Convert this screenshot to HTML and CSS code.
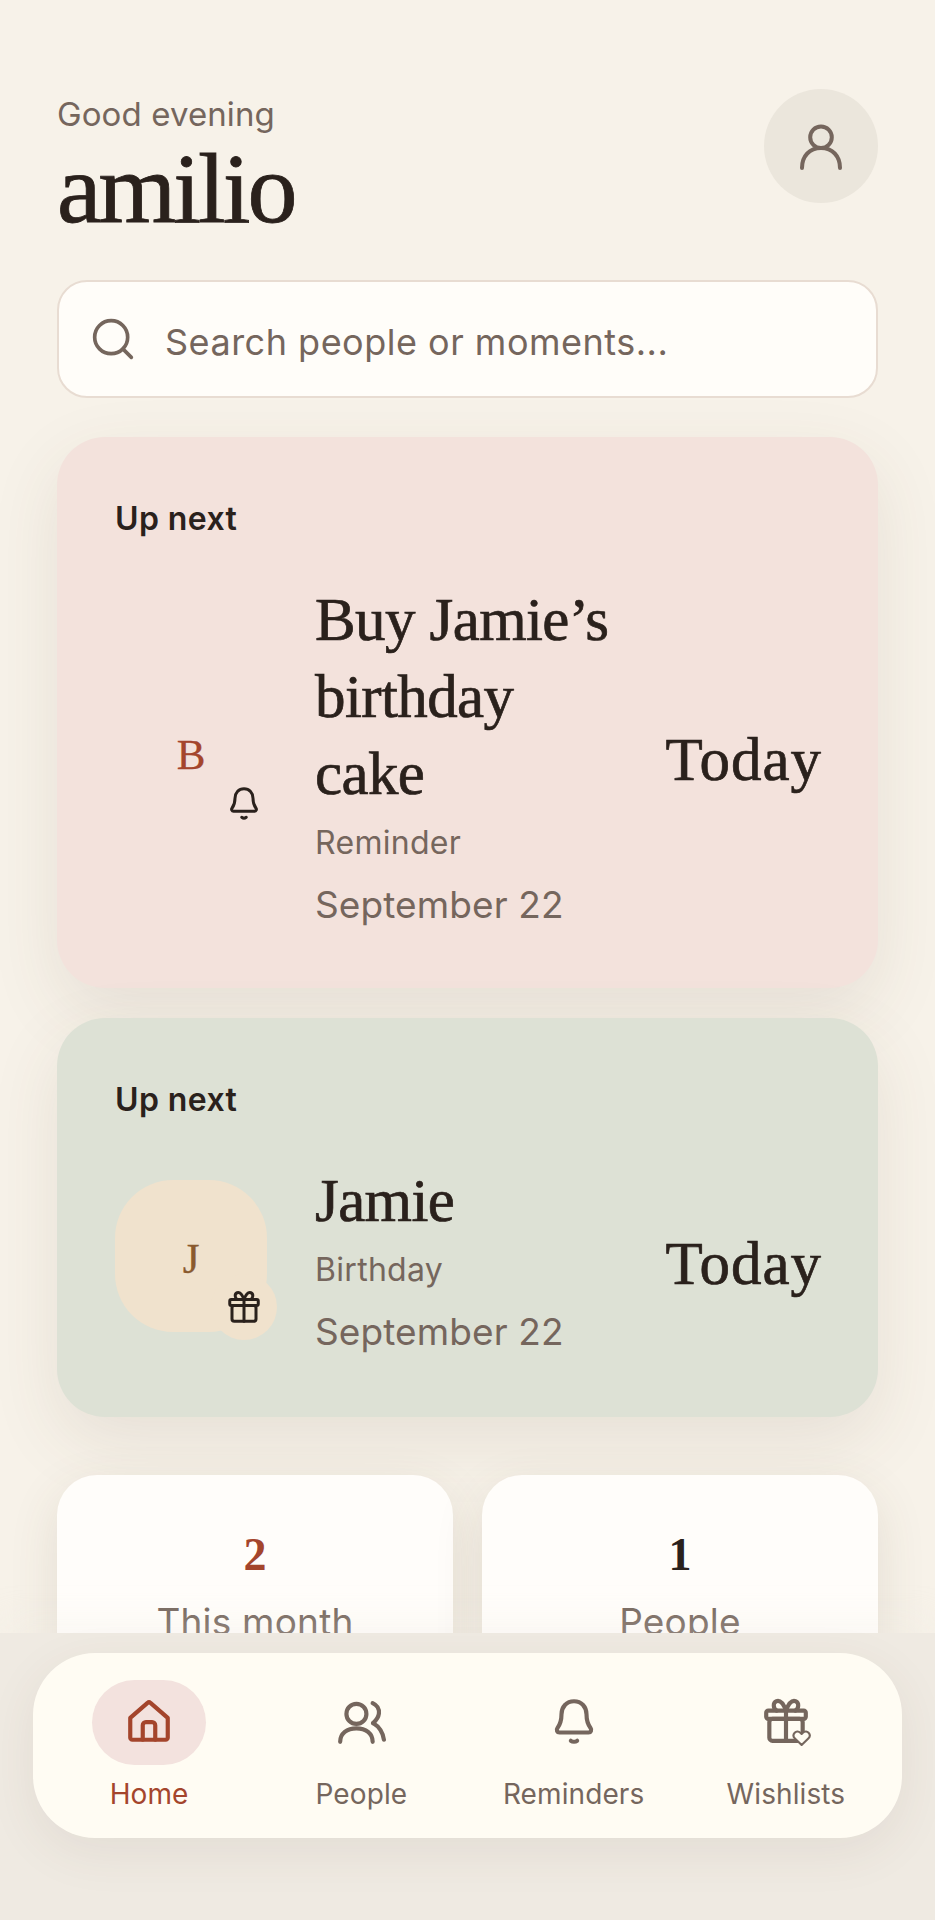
FILE: index.html
```html
<!DOCTYPE html>
<html lang="en">

<head>
    <meta charset="UTF-8">
    <meta name="viewport" content="width=device-width, initial-scale=1.0">
    <title>amilio</title>
    <link rel="stylesheet" href="styles.css">
</head>

<body>
    <div class="page">
        <div class="main">
            <div class="header">
                <div class="hello">
                    <p class="greeting">Good evening</p>
                    <h1 class="logo">amilio</h1>
                </div>
                <div class="profile">
                    <svg class="icon-profile" viewBox="0 0 24 24">
                        <circle cx="12" cy="7.6" r="5.4" />
                        <path d="M2.500 23c0-6 3.800-10 9.500-10s9.500 4 9.500 10" />
                    </svg>
                </div>
            </div>

            <div class="search">
                <svg class="icon-search" viewBox="0 0 24 24">
                    <circle cx="11" cy="11" r="9" />
                    <path d="M17.500 17.500 22 22" />
                </svg>
                <span>Search people or moments...</span>
            </div>

            <div class="card card-rose">
                <h2>Up next</h2>
                <div class="row">
                    <div class="avatar">
                        <span class="initial initial-b">B</span>
                        <span class="badge">
                            <svg viewBox="0 0 24 24">
                                <path d="M12 2.500c-3.600 0-6 2.800-6 6.300 0 3.400-.7 5-2 6.700-.6.800-.1 2 1 2h14c1.100 0 1.600-1.200 1-2-1.300-1.700-2-3.300-2-6.700 0-3.500-2.400-6.300-6-6.300Z" />
                                <path d="M10.500 21.500c.8.600 2.200.600 3 0" />
                            </svg>
                        </span>
                    </div>
                    <div class="text">
                        <h3>Buy Jamie’s birthday cake</h3>
                        <p class="kind">Reminder</p>
                        <p class="date">September 22</p>
                    </div>
                    <div class="when">Today</div>
                </div>
            </div>

            <div class="card card-sage">
                <h2>Up next</h2>
                <div class="row">
                    <div class="avatar avatar-sand">
                        <span class="initial initial-j">J</span>
                        <span class="badge">
                            <svg viewBox="0 0 24 24">
                                <rect x="4" y="11" width="16" height="10.500" rx="1.500" />
                                <rect x="2.500" y="7" width="19" height="4" rx="1" />
                                <path d="M12 7v14.500" />
                                <path d="M12 7C10.500 3 8.800 2 7.400 2.500 5.600 3.200 5.800 6 7.500 7M12 7c1.500-4 3.200-5 4.600-4.500 1.800.7 1.600 3.500-.1 4.500" />
                            </svg>
                        </span>
                    </div>
                    <div class="text">
                        <h3>Jamie</h3>
                        <p class="kind">Birthday</p>
                        <p class="date">September 22</p>
                    </div>
                    <div class="when">Today</div>
                </div>
            </div>

            <div class="stats">
                <div class="stat">
                    <div class="num num-red">2</div>
                    <p>This month</p>
                </div>
                <div class="stat">
                    <div class="num">1</div>
                    <p>People</p>
                </div>
            </div>
        </div>

        <div class="bottom">
            <div class="nav">
                <a href="#" class="nav-item active">
                    <span class="nav-icon">
                        <svg viewBox="0 0 24 24">
                            <path d="M3 10.500 11.300 3.300a1 1 0 0 1 1.400 0L21 10.500V20a1 1 0 0 1-1 1H4a1 1 0 0 1-1-1Z" />
                            <path d="M9 21v-7a1.500 1.500 0 0 1 1.500-1.500h3A1.500 1.500 0 0 1 15 14v7" />
                        </svg>
                    </span>
                    Home
                </a>
                <a href="#" class="nav-item">
                    <span class="nav-icon">
                        <svg viewBox="0 0 24 24">
                            <circle cx="9.800" cy="8.600" r="4.800" />
                            <path d="M2 22c0-4 3.300-6.500 7.800-6.500S17.600 18 17.600 22" />
                            <path d="M17.600 3.400c2.200 1 3.200 3 3 5-.2 1.700-1.200 3.200-2.800 4.600" />
                            <path d="M17.800 13c3 1.800 4.700 4.500 5.200 8" />
                        </svg>
                    </span>
                    People
                </a>
                <a href="#" class="nav-item">
                    <span class="nav-icon">
                        <svg viewBox="0 0 24 24">
                            <path d="M12 2.500c-3.600 0-6 2.800-6 6.300 0 3.400-.7 5-2 6.700-.6.800-.1 2 1 2h14c1.100 0 1.600-1.200 1-2-1.300-1.700-2-3.300-2-6.700 0-3.500-2.400-6.300-6-6.300Z" />
                            <path d="M10.500 21.500c.8.600 2.200.600 3 0" />
                        </svg>
                    </span>
                    Reminders
                </a>
                <a href="#" class="nav-item">
                    <span class="nav-icon">
                        <svg viewBox="0 0 24 24">
                            <rect x="4" y="11" width="16" height="10.500" rx="1.500" />
                            <rect x="2.500" y="7" width="19" height="4" rx="1" />
                            <path d="M12 7v14.500" />
                            <path d="M12 7C10.500 3 8.800 2 7.400 2.500 5.600 3.200 5.800 6 7.500 7M12 7c1.500-4 3.200-5 4.600-4.500 1.800.7 1.600 3.500-.1 4.500" />
                            <path class="heart" d="M19.500 23.500 16.300 20.400c-1.900-1.900.7-4.600 2.600-2.800l.6.600.6-.6c1.900-1.800 4.500.9 2.600 2.800Z" />
                        </svg>
                    </span>
                    Wishlists
                </a>
            </div>
        </div>
    </div>
</body>

</html>
```

FILE: styles.css
```css
* {
    padding: 0;
    margin: 0;
    box-sizing: border-box;
}

body {
    background-color: #f7f2e9;
    color: #2a211c;
    font-family: "Inter", "Liberation Sans", sans-serif;
}

svg {
    display: block;
    fill: none;
    stroke: currentColor;
    stroke-width: 2;
    stroke-linecap: round;
    stroke-linejoin: round;
}

.page {
    height: 1920px;
    display: flex;
    flex-direction: column;
    overflow: hidden;
}

.main {
    height: 1633px;
    flex: none;
    padding: 89px 57px 0;
    overflow: hidden;
}

/* header */
.header {
    height: 191px;
    display: flex;
    justify-content: space-between;
    align-items: flex-start;
}

.greeting {
    padding-top: 2px;
    font-size: 33px;
    line-height: 46px;
    color: #75665d;
    letter-spacing: 0.1px;
}

.logo {
    font-family: "Liberation Serif", serif;
    font-size: 100px;
    font-weight: 400;
    line-height: 103px;
    letter-spacing: -3px;
    -webkit-text-stroke: 0.8px #2a211c;
}

.profile {
    width: 114px;
    height: 114px;
    border-radius: 50%;
    background-color: #ebe6dc;
    color: #75665d;
    display: flex;
    align-items: center;
    justify-content: center;
}

.icon-profile {
    width: 48px;
    height: 48px;
}

/* search */
.search {
    height: 118px;
    padding: 0 32px;
    display: flex;
    align-items: center;
    gap: 30px;
    background-color: #fffdf9;
    border: 2px solid #e8dcd2;
    border-radius: 30px;
    color: #75665d;
    font-size: 36px;
    letter-spacing: 0.5px;
}

.search span {
    padding-top: 6px;
}

.icon-search {
    width: 44px;
    height: 44px;
    flex: none;
}

/* up next cards */
.card {
    margin-top: 39px;
    padding: 58px 58px 54px;
    border-radius: 48px;
    box-shadow: 0 24px 70px rgba(90, 70, 50, .1);
}

.card-sage {
    margin-top: 30px;
    padding-bottom: 56px;
    background-color: #dde1d5;
}

.card-rose {
    background-color: #f3e2dc;
}

.card h2 {
    font-size: 32px;
    font-weight: 600;
    line-height: 48px;
    letter-spacing: 0.4px;
    margin-bottom: 38px;
}

.row {
    display: flex;
    align-items: center;
}

.avatar {
    width: 152px;
    height: 152px;
    flex: none;
    margin: 0 48px 12px 0;
    padding-top: 5px;
    border-radius: 58px;
    display: flex;
    align-items: center;
    justify-content: center;
    position: relative;
}

.avatar-sand,
.avatar-sand .badge {
    background-color: #f0e2cd;
}

.initial {
    font-family: "Liberation Serif", serif;
    font-size: 43px;
    -webkit-text-stroke: 0.3px currentColor;
}

.initial-b {
    color: #a4452c;
}

.initial-j {
    color: #8a5a2e;
}

/* sits on the bottom right corner of the avatar */
.badge {
    width: 66px;
    height: 66px;
    border-radius: 50%;
    display: flex;
    align-items: center;
    justify-content: center;
    position: absolute;
    right: -10px;
    bottom: -8px;
}

.badge svg {
    width: 36px;
    height: 36px;
}

.text {
    flex: 1;
    padding-right: 30px;
}

.text h3 {
    font-family: "Liberation Serif", serif;
    font-size: 61px;
    font-weight: 400;
    line-height: 77px;
    letter-spacing: -0.6px;
    -webkit-text-stroke: 0.7px #2a211c;
}

.kind {
    margin-top: 7px;
    font-size: 32px;
    line-height: 48px;
    color: #75665d;
    letter-spacing: 0.3px;
}

.date {
    margin-top: 9px;
    font-size: 37px;
    line-height: 58px;
    color: #75665d;
    letter-spacing: 0.1px;
}

.when {
    margin-right: -2px;
    padding-top: 4px;
    font-family: "Liberation Serif", serif;
    font-size: 61px;
    letter-spacing: 1px;
    -webkit-text-stroke: 0.7px #2a211c;
}

/* stats */
.stats {
    margin-top: 58px;
    display: grid;
    grid-template-columns: 1fr 1fr;
    gap: 29px;
}

.stat {
    height: 220px;
    padding-top: 53px;
    background-color: #fffdfa;
    border-radius: 40px;
    text-align: center;
    box-shadow: 0 16px 50px rgba(90, 70, 50, .12);
}

.num {
    font-family: "Liberation Serif", serif;
    font-size: 46px;
    font-weight: 700;
    line-height: 54px;
}

.num-red {
    color: #a4452c;
}

.stat p {
    margin-top: 16px;
    font-size: 37px;
    line-height: 48px;
    color: #75665d;
    letter-spacing: 0.2px;
}

/* bottom nav */
.bottom {
    flex: 1;
    padding: 20px 33px 0;
    background-color: #efeae2;
    box-shadow: 0 -14px 30px rgba(240, 235, 228, .25);
    position: relative;
}

.nav {
    height: 185px;
    padding: 27px 10px 0;
    display: grid;
    grid-template-columns: repeat(4, 1fr);
    background-color: #fffcf3;
    border-radius: 62px;
    box-shadow: 0 14px 50px rgba(90, 70, 50, .08);
}

.nav-item {
    display: flex;
    flex-direction: column;
    align-items: center;
    color: #75665d;
    text-decoration: none;
    font-size: 28px;
    line-height: 36px;
    letter-spacing: 0.1px;
}

.nav-icon {
    width: 114px;
    height: 85px;
    margin-bottom: 11px;
    padding-bottom: 3px;
    border-radius: 43px;
    display: flex;
    align-items: center;
    justify-content: center;
}

.nav-icon svg {
    width: 50px;
    height: 50px;
}

.active {
    color: #a4452c;
}

.active .nav-icon {
    background-color: #f3e2de;
}

.heart {
    fill: #fffcf3;
    stroke-width: 1;
}
```
